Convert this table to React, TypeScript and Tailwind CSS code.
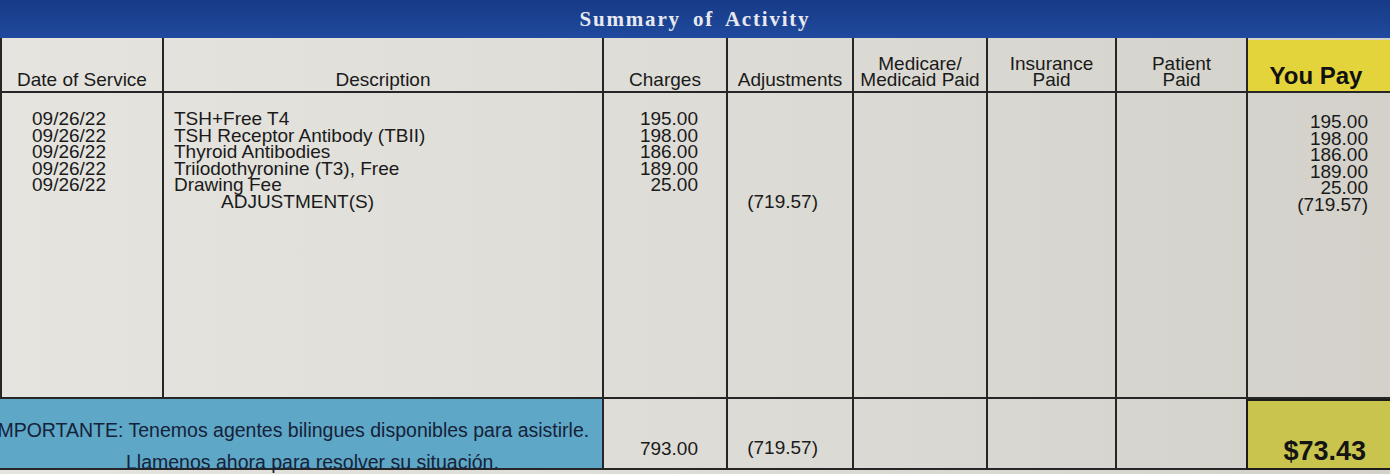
const lines = [
  { date: '09/26/22', desc: 'TSH+Free T4', charge: '195.00' },
  { date: '09/26/22', desc: 'TSH Receptor Antibody (TBII)', charge: '198.00' },
  { date: '09/26/22', desc: 'Thyroid Antibodies', charge: '186.00' },
  { date: '09/26/22', desc: 'Triiodothyronine (T3), Free', charge: '189.00' },
  { date: '09/26/22', desc: 'Drawing Fee', charge: '25.00' },
];

const cell = 'border-r-2 border-b-2 border-[#262626]';
const head = `${cell} flex flex-col items-center justify-end pb-[3px] text-center leading-[16px] text-[19px]`;
const body = `${cell} pt-[18px] leading-[16.6px] text-[19px]`;

export default function App() {
  return (
    <div className="w-[1390px] h-[474px] overflow-hidden bg-gradient-to-r from-[#e5e4df] via-[#dddcd6] to-[#d3d1ca] font-['Liberation_Sans',Arial,sans-serif] text-[#1a1a1a]">
      {/* Title bar */}
      <div className="h-[38px] bg-gradient-to-b from-[#173a86] to-[#1f4a9e] flex items-center justify-center pt-[2px]">
        <span className="font-['Liberation_Serif',serif] font-bold text-[21px] tracking-[1.8px] [word-spacing:5px] text-[#e8e9f0]">
          Summary of Activity
        </span>
      </div>

      <div className="grid grid-cols-[162px_440px_124px_126px_134px_129px_131px_1fr] grid-rows-[55px_306px_71px] border-l-2 border-[#262626]">
        {/* Header row */}
        <div className={head}>Date of Service</div>
        <div className={head}>Description</div>
        <div className={head}>Charges</div>
        <div className={head}>Adjustments</div>
        <div className={head}>
          <span>Medicare/</span>
          <span>Medicaid Paid</span>
        </div>
        <div className={head}>
          <span>Insurance</span>
          <span>Paid</span>
        </div>
        <div className={head}>
          <span>Patient</span>
          <span>Paid</span>
        </div>
        <div className="mt-[2px] border-b-2 border-[#262626] bg-[#e4d43c] flex items-end justify-center pb-[4px] pr-[6px] text-[24px] font-bold leading-[22px] text-[#111]">
          You Pay
        </div>

        {/* Body */}
        <div className={`${body} pl-[30px]`}>
          {lines.map((l, i) => (
            <div key={i}>{l.date}</div>
          ))}
        </div>
        <div className={`${body} pl-[10px]`}>
          {lines.map((l, i) => (
            <div key={i}>{l.desc}</div>
          ))}
          <div className="pl-[47px]">ADJUSTMENT(S)</div>
        </div>
        <div className={`${body} pr-[28px] text-right`}>
          {lines.map((l, i) => (
            <div key={i}>{l.charge}</div>
          ))}
        </div>
        <div className={`${body} pr-[34px] text-right`}>
          <div className="pt-[83px]">(719.57)</div>
        </div>
        <div className={body} />
        <div className={body} />
        <div className={body} />
        <div className="border-b-2 border-[#262626] pt-[21px] pr-[22px] text-right text-[19px] leading-[16.6px]">
          {lines.map((l, i) => (
            <div key={i}>{l.charge}</div>
          ))}
          <div>(719.57)</div>
        </div>

        {/* Totals */}
        <div className="col-span-2 -ml-[2px] border-r-2 border-b-2 border-[#262626] bg-[#5fa7c6] flex flex-col pt-[22px] text-[19.5px] leading-[18px] text-[#15223a] whitespace-nowrap">
          <div className="-ml-[8px]">IMPORTANTE: Tenemos agentes bilingues disponibles para asistirle.</div>
          <div className="pl-[126px] pt-[14px]">Llamenos ahora para resolver su situación.</div>
        </div>
        <div className={`${cell} flex items-end justify-end pr-[28px] pb-[10px] text-[19px] leading-[18px]`}>793.00</div>
        <div className={`${cell} flex items-end justify-end pr-[34px] pb-[11px] text-[19px] leading-[18px]`}>(719.57)</div>
        <div className={cell} />
        <div className={cell} />
        <div className={cell} />
        <div className="border-t-[2px] border-l-[2px] border-b-2 -ml-[2px] border-[#1c1c1c] bg-[#c9c44d] flex items-end justify-end pr-[24px] pb-[5px] text-[27px] font-bold leading-[24px] text-[#141414]">
          $73.43
        </div>
      </div>
    </div>
  );
}
